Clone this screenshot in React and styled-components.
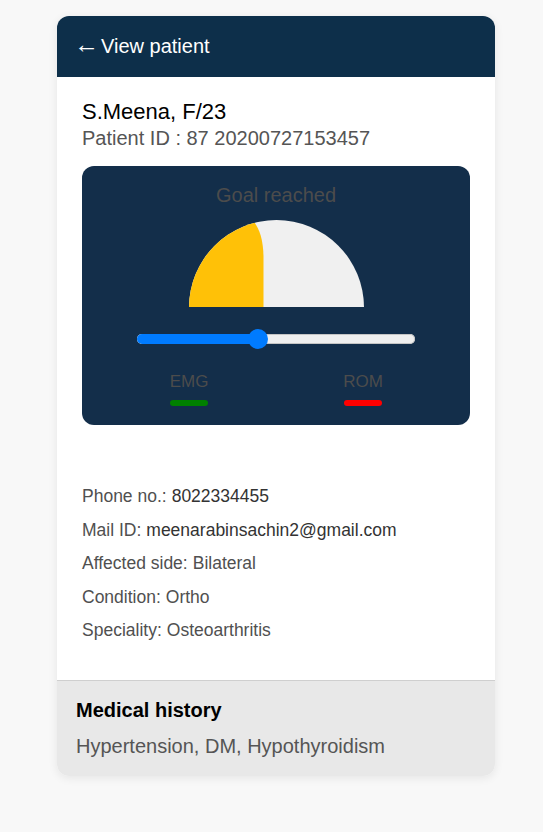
import React from "react";
import styled, { createGlobalStyle } from "styled-components";

const Global = createGlobalStyle`
  html, body { margin: 0; padding: 0; background: #f8f8f8; }
  body { font-family: "Liberation Sans", Arial, sans-serif; }
`;

const Page = styled.div`
  padding: 16px 48px 56px 57px;
`;

const Card = styled.div`
  width: 438px;
  background: #fff;
  border-radius: 12px;
  overflow: hidden;
  box-shadow: 0 2px 10px rgba(0, 0, 0, 0.08);
`;

const Header = styled.div`
  height: 61px;
  background: #0d2f4a;
  color: #fff;
  display: flex;
  align-items: center;
  padding-left: 17px;
  font-size: 20px;
`;

const Arrow = styled.span`
  font-size: 25px;
  line-height: 24px;
  margin-right: 2px;
  margin-bottom: 6px;
`;

const Body = styled.div`
  padding: 22px 25px 32px 25px;
`;

const Name = styled.div`
  font-size: 22px;
  line-height: 25px;
  color: #000;
`;

const PatientId = styled.div`
  font-size: 20px;
  line-height: 24px;
  color: #555;
  margin-top: 2px;
`;

const Panel = styled.div`
  margin-top: 16px;
  background: #132e4a;
  border-radius: 12px;
  height: 259px;
  box-sizing: border-box;
  padding: 17px 0 19px;
  display: flex;
  flex-direction: column;
  align-items: center;
`;

const GoalTitle = styled.div`
  font-size: 20px;
  line-height: 24px;
  color: #4c4c4c;
`;

const Gauge = styled.svg`
  display: block;
  margin-top: 13px;
`;

const Slider = styled.div`
  position: relative;
  width: 278px;
  height: 20px;
  margin-top: 22px;
  display: flex;
  align-items: center;
`;

const Track = styled.div`
  width: 100%;
  height: 10px;
  border-radius: 5px;
  background: #efefef;
  box-shadow: inset 0 0 0 1px #c4c4c4;
  overflow: hidden;
  display: flex;
`;

const Fill = styled.div`
  height: 100%;
  background: #007bff;
`;

const Thumb = styled.div`
  position: absolute;
  top: 0;
  width: 20px;
  height: 20px;
  border-radius: 50%;
  background: #007bff;
  transform: translateX(-50%);
`;

const Legend = styled.div`
  width: 214px;
  margin-top: 23px;
  display: flex;
  justify-content: space-between;
`;

const LegendItem = styled.div`
  display: flex;
  flex-direction: column;
  align-items: center;
  width: 40px;
`;

const LegendLabel = styled.div`
  font-size: 17px;
  line-height: 20px;
  color: #4c4c4c;
`;

const LegendBar = styled.div`
  margin-top: 8px;
  width: 38px;
  height: 6px;
  border-radius: 3px;
  background: ${(p) => p.$color};
`;

const InfoList = styled.div`
  margin-top: 55px;
  display: flex;
  flex-direction: column;
`;

const InfoRow = styled.div`
  height: 33.5px;
  display: flex;
  align-items: center;
  font-size: 17.5px;
  color: #505050;
`;

const Value = styled.span`
  color: ${(p) => (p.$dark ? "#333" : "#505050")};
  margin-left: 5px;
`;

const History = styled.div`
  background: #e8e8e8;
  border-top: 1px solid #cfcfcf;
  padding: 18px 19px 19px;
`;

const HistoryTitle = styled.div`
  font-size: 20px;
  line-height: 22px;
  font-weight: bold;
  color: #000;
`;

const HistoryText = styled.div`
  margin-top: 14px;
  font-size: 20px;
  line-height: 22px;
  color: #555;
`;

const info = [
  ["Phone no.:", "8022334455", true],
  ["Mail ID:", "meenarabinsachin2@gmail.com", true],
  ["Affected side:", "Bilateral", false],
  ["Condition:", "Ortho", false],
  ["Speciality:", "Osteoarthritis", false],
];

export default function App() {
  const progress = 0.435;
  return (
    <>
      <Global />
      <Page>
        <Card>
          <Header>
            <Arrow>←</Arrow>View patient
          </Header>
          <Body>
            <Name>S.Meena, F/23</Name>
            <PatientId>Patient ID : 87 20200727153457</PatientId>
            <Panel>
              <GoalTitle>Goal reached</GoalTitle>
              <Gauge width="175" height="87" viewBox="0 0 175 87">
                <defs>
                  <clipPath id="half">
                    <path d="M0 87.5 A87.5 87.5 0 0 1 175 87.5 Z" />
                  </clipPath>
                </defs>
                <path d="M0 87.5 A87.5 87.5 0 0 1 175 87.5 Z" fill="#f0f0f0" />
                <path
                  clipPath="url(#half)"
                  d="M-5 90 V-5 H52 C64 -5 74.5 10 74.5 38 V90 Z"
                  fill="#ffc107"
                />
              </Gauge>
              <Slider>
                <Track>
                  <Fill style={{ width: `${progress * 100}%` }} />
                </Track>
                <Thumb style={{ left: `${progress * 100}%` }} />
              </Slider>
              <Legend>
                <LegendItem>
                  <LegendLabel>EMG</LegendLabel>
                  <LegendBar $color="#008000" />
                </LegendItem>
                <LegendItem>
                  <LegendLabel>ROM</LegendLabel>
                  <LegendBar $color="#ff0000" />
                </LegendItem>
              </Legend>
            </Panel>
            <InfoList>
              {info.map(([label, value, dark]) => (
                <InfoRow key={label}>
                  {label}
                  <Value $dark={dark}>{value}</Value>
                </InfoRow>
              ))}
            </InfoList>
          </Body>
          <History>
            <HistoryTitle>Medical history</HistoryTitle>
            <HistoryText>Hypertension, DM, Hypothyroidism</HistoryText>
          </History>
        </Card>
      </Page>
    </>
  );
}
